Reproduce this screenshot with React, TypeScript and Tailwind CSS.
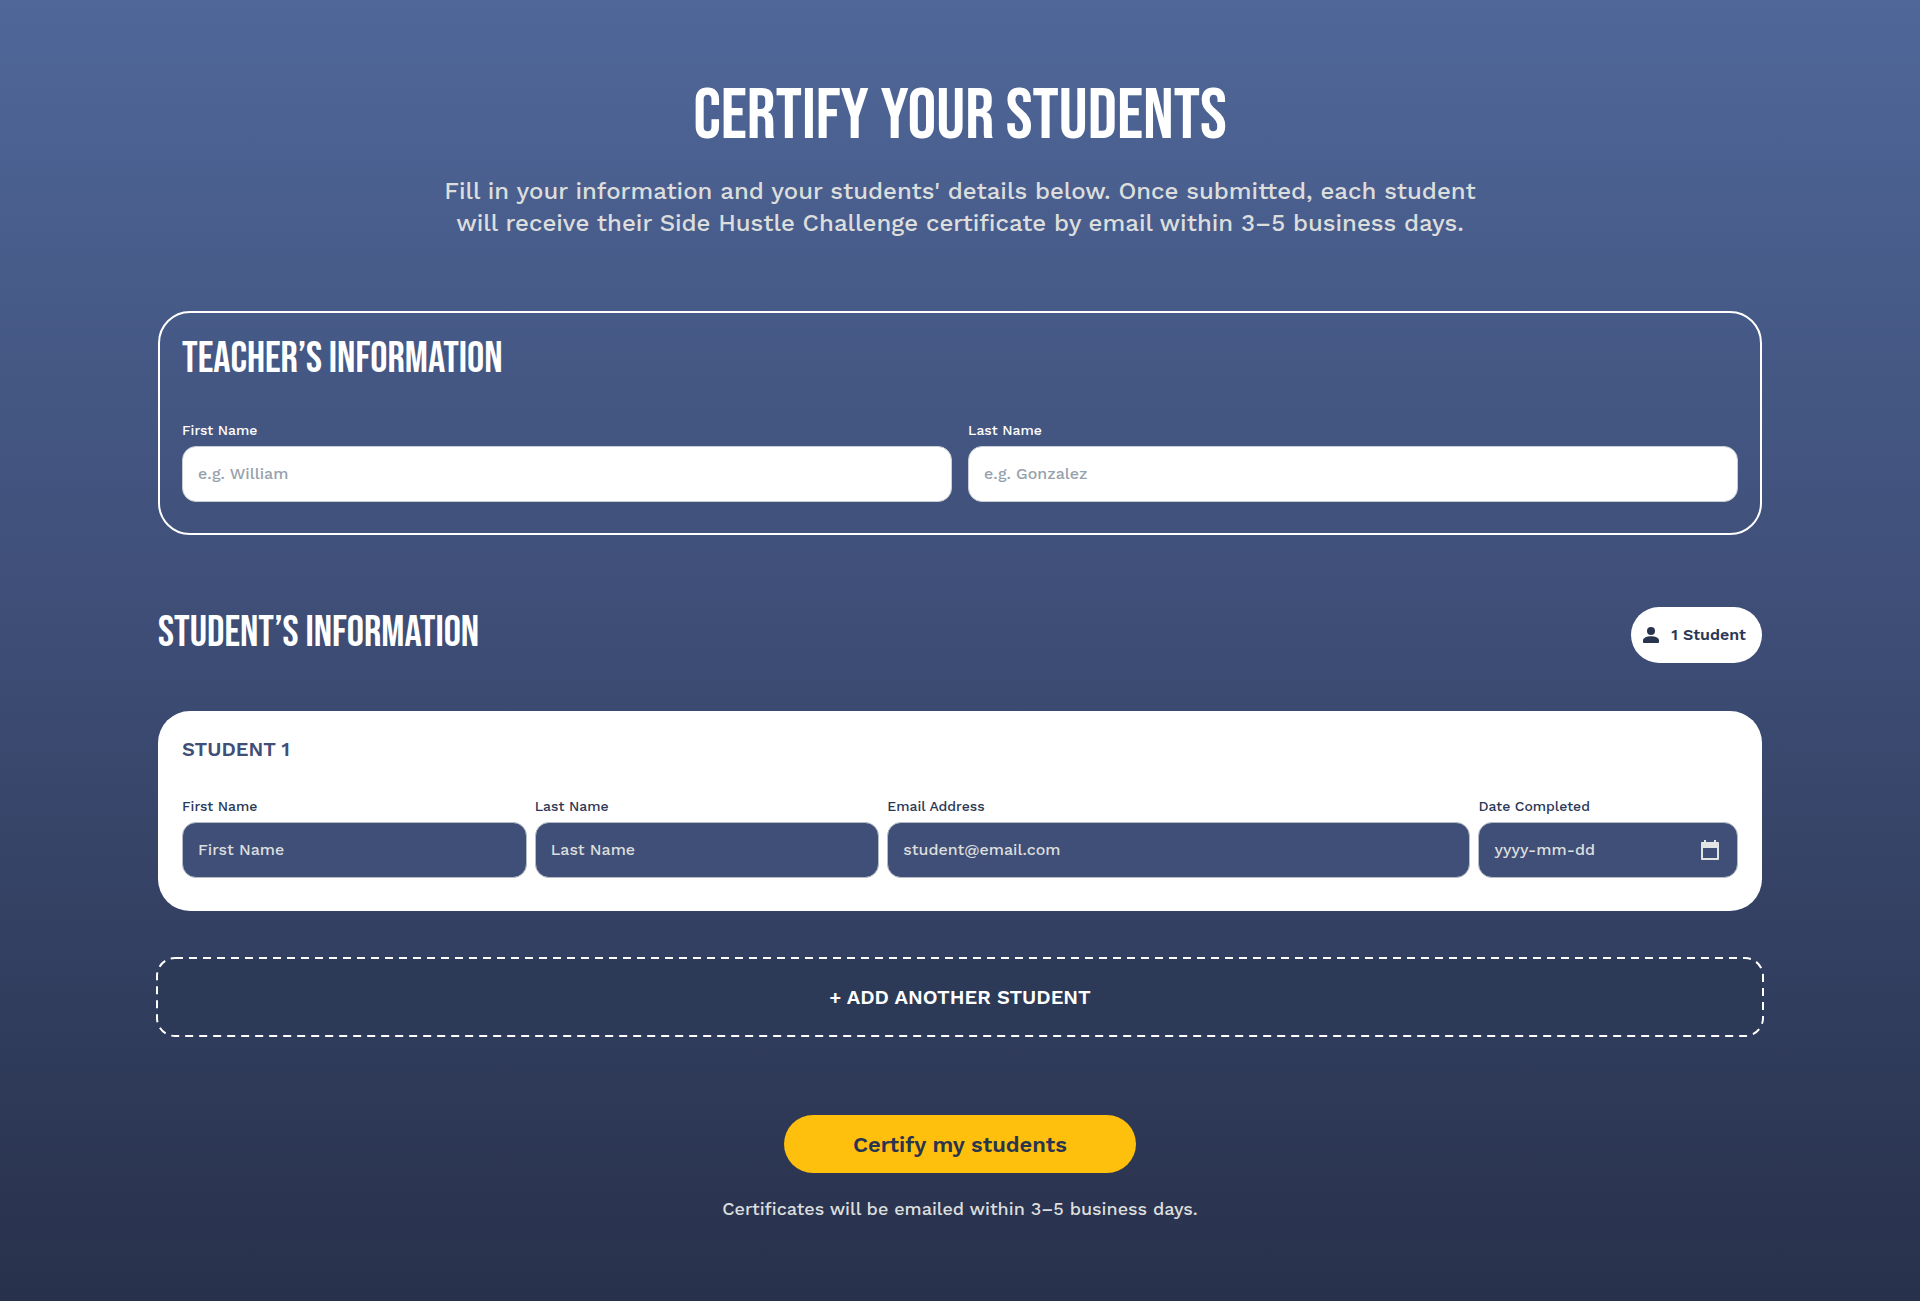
import type { InputHTMLAttributes } from "react";

const display = "font-['Bebas_Neue','Liberation_Sans_Narrow','Roboto_Condensed',sans-serif] font-normal";

type FieldProps = InputHTMLAttributes<HTMLInputElement> & {
  id: string;
  label: string;
  dark?: boolean;
};

function Field({ id, label, dark, ...props }: FieldProps) {
  return (
    <div className="flex flex-col gap-1">
      <label htmlFor={id} className={dark ? "text-sm/6 text-[#2b3757]" : "text-sm/6 text-white"}>
        {label}
      </label>
      <div className="relative">
        <input
          id={id}
          className={
            dark
              ? "h-14 w-full rounded-[14px] border border-[#b5bcc4] bg-[#3f4f78] px-[15px] pb-0.5 text-base text-white placeholder:text-[#dcdedd]"
              : "h-14 w-full rounded-[14px] border border-[#c8ced3] bg-white px-[15px] pb-0.5 text-base text-[#2b3757] placeholder:text-[#97a1ac]"
          }
          {...props}
        />
        {id === "student-date" && <CalendarIcon />}
      </div>
    </div>
  );
}

function CalendarIcon() {
  return (
    <svg viewBox="0 0 24 24" className="pointer-events-none absolute top-4 right-4 size-6 fill-[#e3e4e4]">
      <path d="M20 4h-2V2h-2v2H8V2H6v2H4c-.6 0-1 .4-1 1v16c0 .6.4 1 1 1h16c.6 0 1-.4 1-1V5c0-.6-.4-1-1-1zm-1 16H5V10h14v10z" />
    </svg>
  );
}

function PersonIcon() {
  return (
    <svg viewBox="0 0 24 24" className="size-6 fill-[#29344f]">
      <circle cx="12" cy="8" r="4" />
      <path d="M12 13.3c-4 0-8 1.4-8 4.2V19c0 .6.4 1 1 1h14c.6 0 1-.4 1-1v-1.5c0-2.8-4-4.2-8-4.2z" />
    </svg>
  );
}

export default function App() {
  return (
    <main className="min-h-screen bg-linear-to-b from-[#4f6799] via-[#3e4e77] via-47% to-[#28314b] px-6 pt-[81px] pb-20 font-['Work_Sans',Inter,sans-serif] font-medium text-white antialiased">
      <form className="mx-auto flex max-w-[1604px] flex-col" onSubmit={(e) => e.preventDefault()}>
        <header className="flex flex-col items-center text-center">
          <h1 className={`${display} text-7xl/[72px]`}>CERTIFY YOUR STUDENTS</h1>
          <p className="mt-[22px] text-2xl/8 text-[#dcdedd]">
            Fill in your information and your students' details below. Once submitted, each student
            <br />
            will receive their Side Hustle Challenge certificate by email within 3–5 business days.
          </p>
        </header>

        <section className="mt-[72px] rounded-[32px] border-2 border-white px-[22px] pt-5 pb-[31px]">
          <h2 className={`${display} text-[43px]/[52px]`}>TEACHER’S INFORMATION</h2>
          <div className="mt-[33px] grid grid-cols-2 gap-4">
            <Field id="teacher-first" label="First Name" placeholder="e.g. William" />
            <Field id="teacher-last" label="Last Name" placeholder="e.g. Gonzalez" />
          </div>
        </section>

        <div className="mt-[72px] flex items-start justify-between">
          <h2 className={`${display} text-[43px]/[52px]`}>STUDENT’S INFORMATION</h2>
          <div className="flex h-14 items-center gap-2 rounded-full bg-white pr-4 pl-2 text-base font-semibold text-[#2b3757]">
            <PersonIcon />
            1 Student
          </div>
        </div>

        <section className="mt-12 rounded-[32px] bg-white px-6 pt-6 pb-[33px]">
          <h3 className="text-xl/7 font-semibold text-[#3f4f78]">STUDENT 1</h3>
          <div className="mt-[31px] grid grid-cols-[344fr_344fr_582fr_259fr] gap-2">
            <Field dark id="student-first" label="First Name" placeholder="First Name" />
            <Field dark id="student-last" label="Last Name" placeholder="Last Name" />
            <Field dark id="student-email" label="Email Address" type="email" placeholder="student@email.com" />
            <Field dark id="student-date" label="Date Completed" placeholder="yyyy-mm-dd" />
          </div>
        </section>

        <button type="button" className="relative mt-12 h-[76px] rounded-[18px] bg-[#2d3a57] text-xl font-semibold">
          {/* long dashes, wider than the browser's own dashed border */}
          <svg className="absolute -top-px -left-px h-[calc(100%+2px)] w-[calc(100%+2px)] overflow-visible fill-none stroke-white">
            <rect width="100%" height="100%" rx="18" strokeWidth="2" strokeDasharray="8 6" />
          </svg>
          + ADD ANOTHER STUDENT
        </button>

        <div className="mt-20 flex flex-col items-center">
          <button
            type="submit"
            className="h-[58px] w-[352px] rounded-full bg-[#ffbf0d] text-[22px] font-semibold text-[#29344f]"
          >
            Certify my students
          </button>
          <p className="mt-[22px] text-lg/7 text-[#dcdedd]">Certificates will be emailed within 3–5 business days.</p>
        </div>
      </form>
    </main>
  );
}
